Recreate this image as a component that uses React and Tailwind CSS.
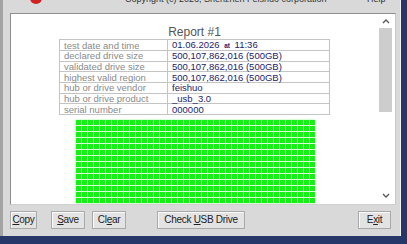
import React from 'react';

const rows = [
  { label: 'test date and time', value: 'date' },
  { label: 'declared drive size', value: '500,107,862,016 (500GB)' },
  { label: 'validated drive size', value: '500,107,862,016 (500GB)' },
  { label: 'highest valid region', value: '500,107,862,016 (500GB)' },
  { label: 'hub or drive vendor', value: 'feishuo' },
  { label: 'hub or drive product', value: '_usb_3.0' },
  { label: 'serial number', value: '000000' },
];

const cells = Array.from({ length: 40 * 16 });

function Btn({ className, children }) {
  return (
    <button
      className={`h-[18px] bg-[#e3e3e3] border border-[#a9a9a9] shadow-[inset_1px_1px_0_#fafafa] text-[10px] text-[#222] leading-none tracking-[-0.3px] ${className}`}
    >
      {children}
    </button>
  );
}

export default function App() {
  return (
    <div className="w-[407px] h-[244px] overflow-hidden bg-[#26386a] font-['Liberation_Sans',Arial,sans-serif]">
      <div className="w-[401px] h-[236px] bg-[#d9d9d9] border-l-[3px] border-[#a3a3a3] border-r border-r-[#f2f2f2] flex flex-col">
        {/* title strip, cut at top */}
        <div className="h-[13px] relative overflow-hidden">
          <div className="absolute left-[27px] top-[-8px] w-[12px] h-[12px] rounded-full bg-[#d32020]" />
          <div className="absolute left-[122px] top-[-6px] text-[9px] leading-[10px] text-[#333] whitespace-nowrap">
            Copyright (c) 2026, Shenzhen Feishuo corporation
          </div>
          <div className="absolute left-[364px] top-[-6px] text-[9px] leading-[10px] text-[#333]">Help</div>
        </div>

        {/* report panel */}
        <div className="ml-[7px] w-[386px] h-[192px] bg-white border border-[#8e8e8e] border-r-[#c8c8c8] border-b-[#d0d0d0] flex overflow-hidden">
          <div className="flex-1 flex flex-col items-center overflow-hidden">
            <div className="mt-[12px] text-[12px] leading-[13px] text-[#555]">Report #1</div>
            <table className="border-collapse text-[9.5px] leading-[9px] w-[271px]">
              <tbody>
                {rows.map((r) => (
                  <tr key={r.label} className="h-[10.7px]">
                    <td className="w-[108px] border border-[#c4c4c4] pl-[4px] py-0 text-[#8a8a8a]">
                      {r.label}
                    </td>
                    <td className="border border-[#c4c4c4] pl-[4px] py-0 text-[#22226e]">
                      {r.value === 'date' ? (
                        <span>
                          01.06.2026 <span className="text-[6.5px] font-bold mx-[2px]">at</span> 11:36
                        </span>
                      ) : (
                        r.value
                      )}
                    </td>
                  </tr>
                ))}
              </tbody>
            </table>
            <div className="mt-[4px] w-[240px] grid grid-cols-[repeat(40,5px)] gap-[1px] bg-[#d6ffd6] p-px">
              {cells.map((_, i) => (
                <div key={i} className="h-[5px] bg-[#14f214]" />
              ))}
            </div>
          </div>
          {/* scrollbar */}
          <div className="w-[15px] mr-[2px] flex flex-col items-center bg-white">
            <div className="h-[14px] flex items-center justify-center">
              <svg width="8" height="6" viewBox="0 0 8 6">
                <path d="M1 5 L4 2 L7 5" fill="none" stroke="#555" strokeWidth="1.3" />
              </svg>
            </div>
            <div className="w-[13px] h-[84px] bg-[#cdcdcd]" />
            <div className="flex-1" />
            <div className="h-[16px] flex items-center justify-center">
              <svg width="8" height="6" viewBox="0 0 8 6">
                <path d="M1 1 L4 4 L7 1" fill="none" stroke="#555" strokeWidth="1.3" />
              </svg>
            </div>
          </div>
        </div>

        {/* buttons */}
        <div className="mt-[6px] ml-[7px] flex items-center">
          <Btn className="w-[27px]"><u>C</u>opy</Btn>
          <Btn className="w-[34px] ml-[14px]"><u>S</u>ave</Btn>
          <Btn className="w-[34px] ml-[7px]">Cl<u>e</u>ar</Btn>
          <Btn className="w-[88px] ml-[31px]">Check <u>U</u>SB Drive</Btn>
          <Btn className="w-[33px] ml-[113px]">E<u>x</u>it</Btn>
        </div>
      </div>
    </div>
  );
}
